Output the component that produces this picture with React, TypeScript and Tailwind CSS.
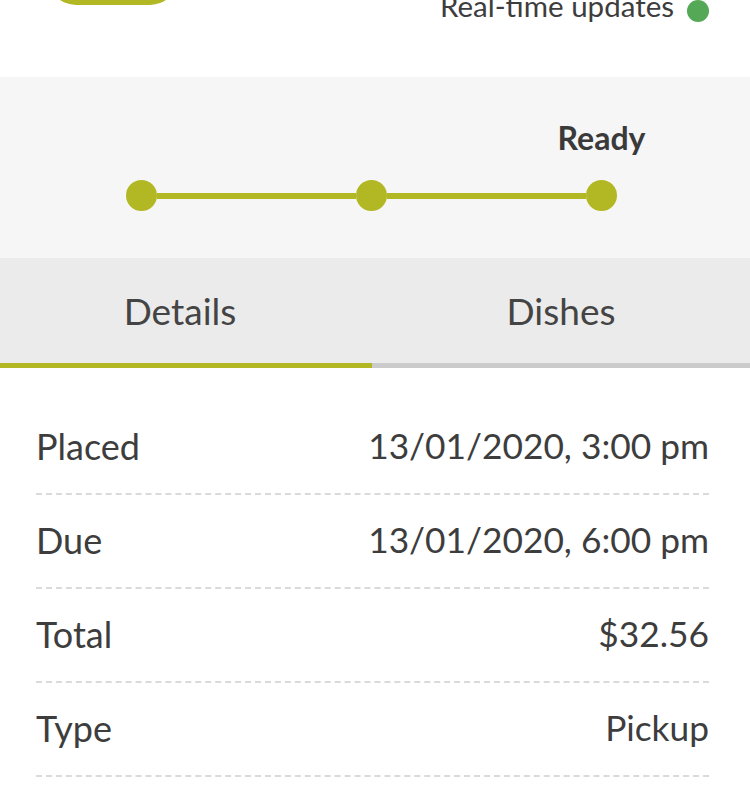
const GREEN = "bg-[#b2b823]";

const rows = [
  { label: "Placed", value: "13/01/2020, 3:00 pm" },
  { label: "Due", value: "13/01/2020, 6:00 pm" },
  { label: "Total", value: "$32.56" },
  { label: "Type", value: "Pickup" },
];

const steps = ["", "", "Ready"];

export default function App() {
  return (
    <main className="min-h-screen overflow-hidden bg-white font-['Lato','Liberation_Sans',sans-serif] text-[#3d3d3d]">
      {/* header, scrolled so its top is cut off */}
      <header className="flex h-[77px] items-start justify-between pl-[48px] pr-[41px]">
        <button
          className={`mt-[-51px] h-[56px] w-[130px] rounded-full ${GREEN}`}
          type="button"
        />
        <div className="mt-[-11px] flex items-center gap-[13px]">
          <span className="text-[29.5px] leading-none">Real-time updates</span>
          <span className="mt-[11px] h-[22px] w-[22px] rounded-full bg-[#55a855]" />
        </div>
      </header>

      {/* progress */}
      <section className="h-[181px] bg-[#f6f6f6] pt-[45px]">
        <div className="ml-[126px] mr-[133px]">
          <div className="flex justify-between">
            {steps.map((label, i) => (
              <div className="flex w-[31px] justify-center" key={i}>
                <span className="whitespace-nowrap text-[32px] font-bold leading-none text-[#3a3a3a]">
                  {label || "\u00a0"}
                </span>
              </div>
            ))}
          </div>
          <div className="mt-[26px] flex items-center">
            <span className={`h-[31px] w-[31px] shrink-0 rounded-full ${GREEN}`} />
            <span className={`h-[6px] flex-1 ${GREEN}`} />
            <span className={`h-[31px] w-[31px] shrink-0 rounded-full ${GREEN}`} />
            <span className={`h-[6px] flex-1 ${GREEN}`} />
            <span className={`h-[31px] w-[31px] shrink-0 rounded-full ${GREEN}`} />
          </div>
        </div>
      </section>

      {/* tabs */}
      <nav className="grid grid-cols-[372px_1fr] bg-[#ebebeb]">
        <button
          className="flex h-[110px] items-center justify-center border-b-[5px] border-[#b2b823] pr-[12px] text-[37px] text-[#444]"
          type="button"
        >
          Details
        </button>
        <button
          className="flex h-[110px] items-center justify-center border-b-[5px] border-[#cbcbcb] text-[37px] text-[#444]"
          type="button"
        >
          Dishes
        </button>
      </nav>

      {/* details */}
      <dl className="pl-[36px] pr-[41px] pt-[33px]">
        {rows.map((row) => (
          <div
            className="flex h-[94px] items-center justify-between border-b-2 border-dashed border-[#dadada] pb-[2px]"
            key={row.label}
          >
            <dt className="text-[36px]">{row.label}</dt>
            <dd className="text-[35.3px]">{row.value}</dd>
          </div>
        ))}
      </dl>
    </main>
  );
}
